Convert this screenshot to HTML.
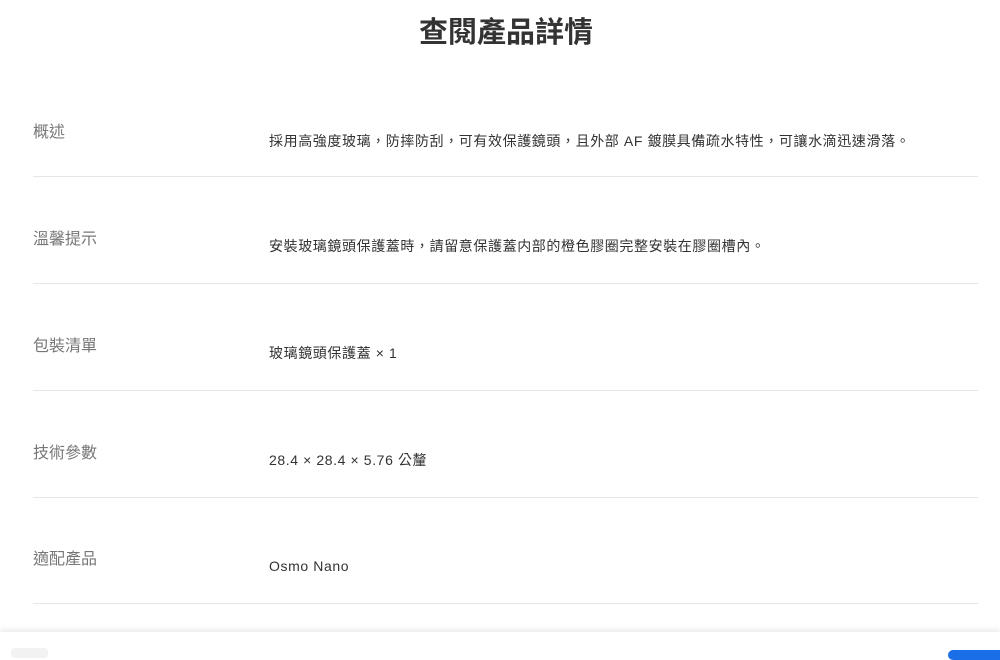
<!DOCTYPE html>
<html><head><meta charset="utf-8"><style>
body{margin:0;width:1000px;height:652px;overflow:hidden;background:#fff;font-family:"Liberation Sans","Noto Sans CJK TC",sans-serif;position:relative}
h1{position:absolute;top:14px;left:0;width:1012px;text-align:center;margin:0;font-size:29px;font-weight:bold;color:#333;line-height:38px}
.row{position:absolute;left:33px;width:945px;height:106px;border-bottom:1px solid #e6e6e6}
.l{position:absolute;left:0;top:52px;font-size:16px;color:#777;line-height:22px}
.v{position:absolute;left:236px;top:59px;font-size:14px;color:#333;line-height:20px;white-space:nowrap;letter-spacing:0.6px}
.bar{position:absolute;left:0;top:632px;width:1000px;height:20px;background:#fff;box-shadow:0 -3px 5px rgba(0,0,0,0.08)}
</style></head><body>
<h1>查閱產品詳情</h1>
<div class="row" style="top:70px"><div class="l">概述</div><div class="v" style="top:61px">採用高強度玻璃，防摔防刮，可有效保護鏡頭，且外部 AF 鍍膜具備疏水特性，可讓水滴迅速滑落。</div></div>
<div class="row" style="top:177px"><div class="l">溫馨提示</div><div class="v">安裝玻璃鏡頭保護蓋時，請留意保護蓋内部的橙色膠圈完整安裝在膠圈槽內。</div></div>
<div class="row" style="top:284px"><div class="l">包裝清單</div><div class="v">玻璃鏡頭保護蓋 × 1</div></div>
<div class="row" style="top:391px"><div class="l">技術參數</div><div class="v">28.4 × 28.4 × 5.76 公釐</div></div>
<div class="row" style="top:497px"><div class="l">適配產品</div><div class="v">Osmo Nano</div></div>
<div class="bar"><div style="position:absolute;left:11px;top:16px;width:37px;height:10px;background:#f2f2f2;border-radius:4px"></div><div style="position:absolute;left:948px;top:18px;width:60px;height:10px;background:#1a6ee8;border-radius:10px"></div></div>
</body></html>
